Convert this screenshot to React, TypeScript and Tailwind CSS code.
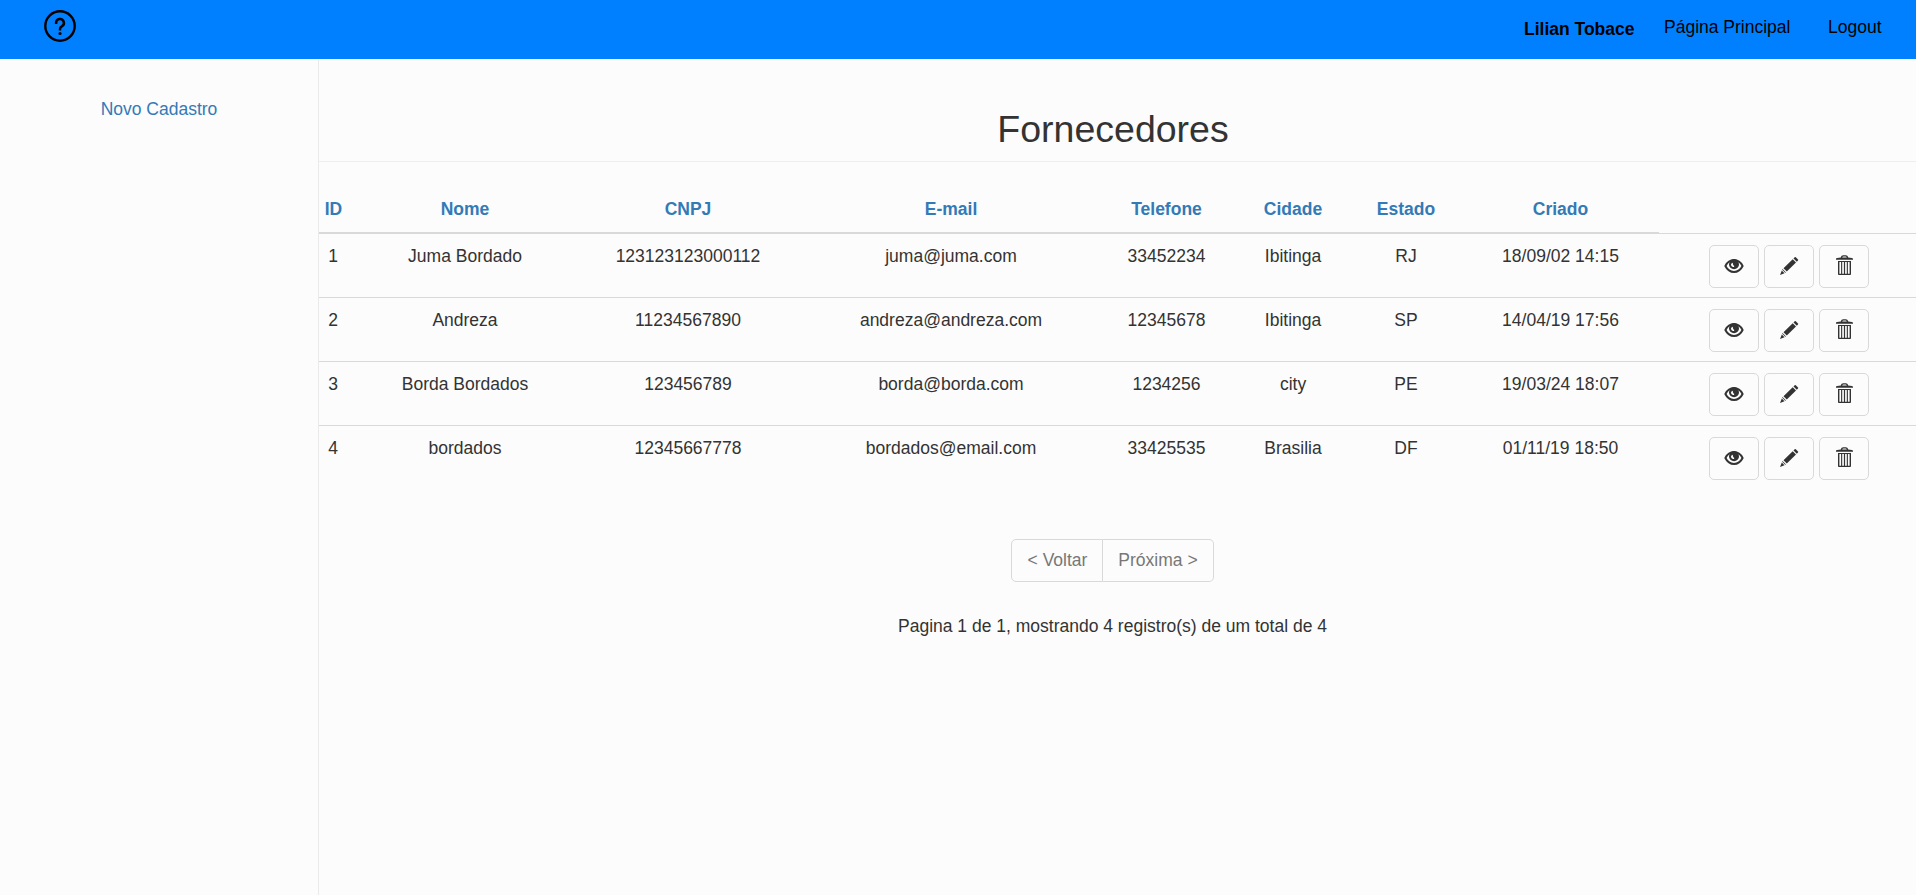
import type { ReactNode } from "react";

type Supplier = {
  id: number;
  name: string;
  cnpj: string;
  email: string;
  phone: string;
  city: string;
  state: string;
  created: string;
};

const suppliers: Supplier[] = [
  { id: 1, name: "Juma Bordado", cnpj: "123123123000112", email: "juma@juma.com", phone: "33452234", city: "Ibitinga", state: "RJ", created: "18/09/02 14:15" },
  { id: 2, name: "Andreza", cnpj: "11234567890", email: "andreza@andreza.com", phone: "12345678", city: "Ibitinga", state: "SP", created: "14/04/19 17:56" },
  { id: 3, name: "Borda Bordados", cnpj: "123456789", email: "borda@borda.com", phone: "1234256", city: "city", state: "PE", created: "19/03/24 18:07" },
  { id: 4, name: "bordados", cnpj: "12345667778", email: "bordados@email.com", phone: "33425535", city: "Brasilia", state: "DF", created: "01/11/19 18:50" },
];

const headings = ["ID", "Nome", "CNPJ", "E-mail", "Telefone", "Cidade", "Estado", "Criado"];

function HelpIcon() {
  return (
    <svg viewBox="0 0 32 32" className="size-8" fill="none" stroke="#000" strokeWidth="2.4">
      <circle cx="16" cy="16" r="14.7" />
      <path d="M12.100 13.900v-.9a3.900 3.900 0 1 1 5.700 3.400c-1.300.7-1.800 1.300-1.800 2.500v1.700" strokeWidth="2.5" />
      <circle cx="16" cy="23.500" r="1.600" fill="#000" stroke="none" />
    </svg>
  );
}

function EyeIcon() {
  return (
    <svg viewBox="0 0 20 20" className="size-5">
      <path
        d="M1.400 11C3.300 7.200 6.300 5 10 5s6.700 2.200 8.600 6c-1.900 3.800-4.900 6-8.600 6s-6.700-2.200-8.600-6Z"
        fill="none"
        stroke="#333"
        strokeWidth="2"
        strokeLinejoin="round"
      />
      <circle cx="10" cy="9.300" r="5" fill="#333" />
      <path d="M8.900 7.800C7.300 8.100 6.700 9.300 7.200 10.600c.4 1.100 1.500 1.700 2.800 1.300L10.300 10.900C9.300 10.500 8.700 9.700 8.900 7.800Z" fill="#fcfcfc" />
    </svg>
  );
}

function PencilIcon() {
  return (
    <svg viewBox="0 0 20 20" className="size-5" fill="#333">
      <path d="M15.700 2.300a.8.8 0 0 1 1.100 0l2.200 2.200a.8.8 0 0 1 0 1.100l-1.200 1.200-3.300-3.300ZM13.700 4.300 17 7.600 7.800 16.600 4.500 13.300ZM3.500 13.900l3.500 3.500-.8.300L3.200 14.700ZM2.800 15.600l2.700 2.600L1 20Z" />
    </svg>
  );
}

function TrashIcon() {
  return (
    <svg viewBox="0 0 20 20" className="size-5" fill="#333">
      <path
        fillRule="evenodd"
        d="M2 4.700V4C2 3.400 2.500 3 3.200 2.900L6.800 2.500C7.200 1 8 .3 9.300.3h2.400c1.300 0 2.100.7 2.500 2.200l3.600.4c.7.1 1.200.5 1.200 1.100V4.700ZM8.200 2.500h4.600c-.2-.6-.6-.9-1.200-.9H9.400c-.6 0-1 .3-1.200.9Z"
      />
      <path
        fillRule="evenodd"
        d="M4 6h13v13.200c0 .5-.4.800-.9.800H4.900c-.5 0-.9-.3-.9-.8ZM5.400 7v11.700h1.700V7ZM8.200 7v11.700h1.700V7ZM11.100 7v11.700h1.700V7ZM13.900 7v11.700h1.700V7Z"
      />
    </svg>
  );
}

function IconButton({ label, children }: { label: string; children: ReactNode }) {
  return (
    <button
      aria-label={label}
      className="flex h-[43px] w-[50px] items-start justify-center rounded-[5px] border border-[#d9d9d9] pt-[9px]"
    >
      {children}
    </button>
  );
}

function Cell({ children }: { children: ReactNode }) {
  return <td className="border-b border-[#d9d9d9] pt-[10px] first:pr-3 group-last:border-transparent">{children}</td>;
}

function SupplierRow({ supplier }: { supplier: Supplier }) {
  return (
    <tr className="group h-16 align-top">
      <Cell>{supplier.id}</Cell>
      <Cell>{supplier.name}</Cell>
      <Cell>{supplier.cnpj}</Cell>
      <Cell>{supplier.email}</Cell>
      <Cell>{supplier.phone}</Cell>
      <Cell>{supplier.city}</Cell>
      <Cell>{supplier.state}</Cell>
      <Cell>{supplier.created}</Cell>
      <td className="border-b border-[#d9d9d9] pt-[11px] group-last:border-transparent">
        <div className="flex gap-[5px] pl-[50px]">
          <IconButton label="Visualizar">
            <EyeIcon />
          </IconButton>
          <IconButton label="Editar">
            <PencilIcon />
          </IconButton>
          <IconButton label="Excluir">
            <TrashIcon />
          </IconButton>
        </div>
      </td>
    </tr>
  );
}

export default function App() {
  return (
    <div className="flex h-[895px] w-full flex-col overflow-hidden bg-[#fcfcfc] font-['Liberation_Sans',Arial,sans-serif] text-[17.5px] leading-[25px] text-[#333]">
      <header className="flex h-[59px] shrink-0 items-start justify-between bg-[#0080ff] pr-[34.5px] pl-11 text-black">
        <div className="pt-[10px]">
          <HelpIcon />
        </div>
        <nav className="flex items-start">
          <span className="mr-[29.5px] pt-[17px] font-bold">Lilian Tobace</span>
          <a className="mr-[37.5px] pt-[15px]">Página Principal</a>
          <a className="pt-[15px]">Logout</a>
        </nav>
      </header>

      <div className="flex flex-1 pt-px">
        <aside className="w-[319px] border-r border-[#eaeaea] pt-[37px] text-center text-[#337ab7]">
          <a>Novo Cadastro</a>
        </aside>

        <main className="flex-1 text-center">
          <h1 className="h-[102px] border-b border-[#eeeeee] pt-[49px] pr-[9px] text-[37.5px] leading-[41.25px]">
            Fornecedores
          </h1>

          <table className="w-full table-fixed border-separate border-spacing-0">
            <colgroup>
              <col className="w-10" />
              <col className="w-[212px]" />
              <col className="w-[234px]" />
              <col className="w-[292px]" />
              <col className="w-[139px]" />
              <col className="w-[114px]" />
              <col className="w-[112px]" />
              <col className="w-[197px]" />
              <col className="w-[257px]" />
            </colgroup>
            <thead>
              <tr className="h-[72px] align-top text-[#337ab7]">
                {headings.map((heading) => (
                  <th key={heading} className="border-b-2 border-[#d9d9d9] pt-[35px] font-bold first:pr-[11px]">
                    {heading}
                  </th>
                ))}
                <th className="border-b border-[#d9d9d9]" />
              </tr>
            </thead>
            <tbody>
              {suppliers.map((supplier) => (
                <SupplierRow key={supplier.id} supplier={supplier} />
              ))}
            </tbody>
          </table>

          <div className="mt-[49px] flex h-[43px] justify-center pr-[10px] text-[#777]">
            <button className="w-[92px] rounded-l-[5px] border border-[#d9d9d9] pb-px pl-px">&lt; Voltar</button>
            <button className="w-[111px] rounded-r-[5px] border border-l-0 border-[#d9d9d9] pb-px">Próxima &gt;</button>
          </div>
          <p className="mt-8 pr-[10px]">Pagina 1 de 1, mostrando 4 registro(s) de um total de 4</p>
        </main>
      </div>
    </div>
  );
}
